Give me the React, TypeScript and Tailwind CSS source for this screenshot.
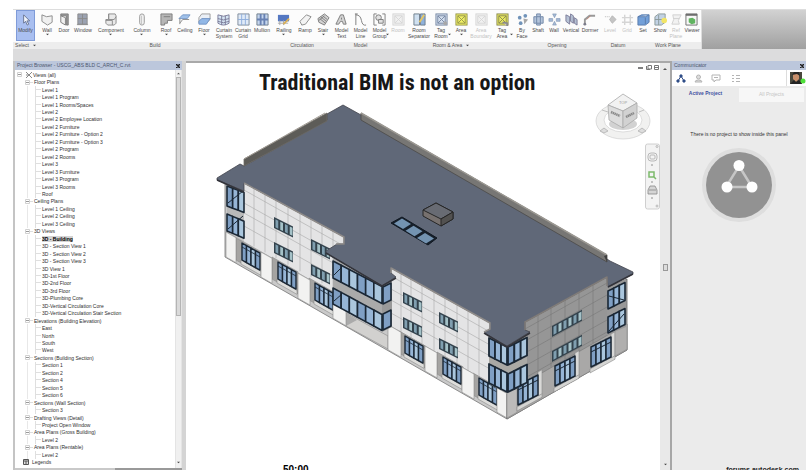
import React from "react";

type Tool = { label: string[]; icon: string; width: string; arrow?: boolean; sideArrow?: boolean; muted?: boolean; active?: boolean };
type Group = { name: string; arrow?: boolean; tools: Tool[] };

const groups: Group[] = [
  { name: "Select", arrow: true, tools: [{ label: ["Modify"], icon: "cursor", width: "w-[25px]", active: true }] },
  {
    name: "Build",
    tools: [
      { label: ["Wall"], icon: "wall", width: "w-[18px]", arrow: true },
      { label: ["Door"], icon: "door", width: "w-4" },
      { label: ["Window"], icon: "window", width: "w-[22px]" },
      { label: ["Component"], icon: "component", width: "w-[34px]", arrow: true },
      { label: ["Column"], icon: "column", width: "w-7", arrow: true },
      { label: ["Roof"], icon: "roof", width: "w-5", arrow: true },
      { label: ["Ceiling"], icon: "ceiling", width: "w-[18px]" },
      { label: ["Floor"], icon: "floor", width: "w-5", arrow: true },
      { label: ["Curtain", "System"], icon: "curtain", width: "w-5" },
      { label: ["Curtain", "Grid"], icon: "curtaingrid", width: "w-[18px]" },
      { label: ["Mullion"], icon: "mullion", width: "w-5" },
    ],
  },
  {
    name: "Circulation",
    tools: [
      { label: ["Railing"], icon: "railing", width: "w-6", arrow: true },
      { label: ["Ramp"], icon: "ramp", width: "w-[18px]" },
      { label: ["Stair"], icon: "stair", width: "w-[18px]", arrow: true },
    ],
  },
  {
    name: "Model",
    tools: [
      { label: ["Model", "Text"], icon: "text", width: "w-[19px]" },
      { label: ["Model", "Line"], icon: "line", width: "w-[19px]" },
      { label: ["Model", "Group"], icon: "group", width: "w-[19px]", sideArrow: true },
    ],
  },
  {
    name: "Room & Area",
    arrow: true,
    tools: [
      { label: ["Room"], icon: "room", width: "w-[18px]", muted: true },
      { label: ["Room", "Separator"], icon: "separator", width: "w-6" },
      { label: ["Tag", "Room"], icon: "tagroom", width: "w-5", sideArrow: true },
      { label: ["Area"], icon: "area", width: "w-5", arrow: true },
      { label: ["Area", "Boundary"], icon: "room", width: "w-5", muted: true },
      { label: ["Tag", "Area"], icon: "tagarea", width: "w-[22px]", sideArrow: true },
    ],
  },
  {
    name: "Opening",
    tools: [
      { label: ["By", "Face"], icon: "face", width: "w-[18px]" },
      { label: ["Shaft"], icon: "shaft", width: "w-3.5" },
      { label: ["Wall"], icon: "openwall", width: "w-[18px]" },
      { label: ["Vertical"], icon: "vertical", width: "w-4" },
      { label: ["Dormer"], icon: "dormer", width: "w-[22px]" },
    ],
  },
  {
    name: "Datum",
    tools: [
      { label: ["Level"], icon: "level", width: "w-[18px]", muted: true },
      { label: ["Grid"], icon: "grid", width: "w-4", muted: true },
    ],
  },
  {
    name: "Work Plane",
    tools: [
      { label: ["Set"], icon: "set", width: "w-4" },
      { label: ["Show"], icon: "show", width: "w-[18px]" },
      { label: ["Ref", "Plane"], icon: "refplane", width: "w-3.5", muted: true },
      { label: ["Viewer"], icon: "viewer", width: "w-[18px]" },
    ],
  },
];

const xbox = (fill: string, stroke: string) => (
  <g stroke={stroke}>
    <rect x="1" y="1" width="12" height="12" fill={fill} />
    <path d="M3 3l8 8M11 3l-8 8" />
    <path d="M3 3h8v8h-8z" fill="none" />
  </g>
);

const icons: Record<string, React.ReactNode> = {
  cursor: <path d="M5 2v9l2-2 2 4 1.500-1-2-3.500h3z" fill="#fff" stroke="#5a6480" />,
  wall: <path d="M1 2l5 2 6-1v7l-5 3-6-4z" fill="#eee" stroke="#777" />,
  door: <g stroke="#666"><path d="M3 1h8v12h-2v-10h-6z" fill="#888" /><path d="M3 3l5 2v8l-5-3z" fill="#eee" /></g>,
  window: <g stroke="#777"><path d="M2 1h10v11h-10z" fill="#8b93a5" /><path d="M7 1v11M2 6h10M1 12.500h12" /></g>,
  component: <g fill="#e6e6e6" stroke="#777"><path d="M5 1h7l1 2v8l-2 2h-7l-2-2v-4h3z" /><path d="M5 1v6h6l2-3M2 8h7v5" fill="none" /></g>,
  column: <g fill="#eee" stroke="#888"><rect x="5" y="1" width="5" height="12" rx="2.500" /><path d="M7 3v9" stroke="#bbb" /></g>,
  roof: <path d="M1 1h12v7h-5v3h-3v2h-4z M4 4h7" fill="#aaa" stroke="#666" />,
  ceiling: <g stroke="#6288bd"><path d="M1 6l4-4h8l-3 4z" fill="#8fb7e8" /><path d="M2 6v6M2 11l3-4h7" fill="none" stroke="#777" /></g>,
  floor: <g stroke="#888"><path d="M4 1h9v6l-4 4h-8v-6z" fill="#e8edf5" /><path d="M1 9l3-3h9l-4 6h-8z" fill="#7fabe3" stroke="#5b83bb" /></g>,
  curtain: <g fill="#cfe0f2" stroke="#668"><path d="M1 2q6 3 12 0v9q-6 4-12 0z" /><path d="M5 3v10M9 3v10M1 6q6 3 12 0M1 9q6 3 12 0" fill="none" /></g>,
  curtaingrid: <g fill="#dce8f7" stroke="#678"><path d="M1 1h12v12h-12z" /><path d="M5 1v12M9 1v12M1 7h12" stroke="#7ba0d6" /></g>,
  mullion: <g fill="#bcd0ec" stroke="#567"><path d="M1 1h12v12h-12z" /><path d="M5 1v12M9 1v12M1 7h12" strokeWidth="2" stroke="#4f6ca6" /></g>,
  railing: <g><path d="M1 2h12v7h-12z" fill="#3862b8" /><path d="M1 11h11M3 8v5M7 8v5" stroke="#999" /><path d="M7 12l6-6" stroke="#d5a33b" strokeWidth="2" /></g>,
  ramp: <path d="M1 9l7-7 5 2-6 8-4 1z" fill="#f2f2f2" stroke="#777" />,
  stair: <path d="M1 6l7-5 5 4-5 8-6-3z M4 4l6 5M6 3l5 4M3 6l6 5M2 8l6-5" fill="#ccc" stroke="#666" />,
  text: <path d="M1 12l5-10h3l3 10h-3l-1-3h-2l-2 3z M7 5v2" fill="#ccc" stroke="#666" />,
  line: <path d="M2 1v12M2 2q5 0 6 6t5 5M1 1h3" fill="none" stroke="#666" />,
  group: <g fill="#ddd" stroke="#666"><path d="M4 1h-3v12h3M10 1h3v12h-3" fill="none" /><circle cx="6" cy="5" r="3" /><path d="M6 7h5v4h-5z" /></g>,
  room: xbox("#f0f0f0", "#d0d0d0"),
  separator: <g stroke="#567"><path d="M1 1h6v12h-6z" fill="#c8dcef" /><path d="M8 1h5v12h-5z" fill="#7ba4d6" /><path d="M7 10l5-8" stroke="#e4be48" strokeWidth="2" /></g>,
  tagroom: <g>{xbox("#cedbec", "#607394")}<circle cx="11" cy="11" r="2" fill="#999" /></g>,
  area: xbox("#f0f04c", "#84842f"),
  tagarea: <g>{xbox("#eaea48", "#777735")}<path d="M7 10l5 1v3" fill="#ccc" stroke="#777" strokeWidth="2" /></g>,
  face: <g fill="#5881ae"><circle cx="4" cy="5" r="2" /><circle cx="10" cy="3" r="2" /><circle cx="5" cy="11" r="2" /><path d="M8 6l5 1-4 5z" fill="#999" /></g>,
  shaft: <path d="M2 4h3v-3h4v3h3v7h-3v2h-4v-2h-3z M5 4h4v7h-4z" fill="#a8bbd6" stroke="#577398" />,
  openwall: <g fill="#95aed0" stroke="#7088aa" strokeWidth=".7"><path d="M5 1h4l-2 4zM1 6h4v3h-4zM9 6h4v3h-4zM5 13h4l-2-4z" /></g>,
  vertical: <g fill="#aab9cf" stroke="#668"><path d="M1 2l4 2v8l-4-3zM6 1l3 2v8l-3-2zM10 5l3 2v6l-3-2z" /></g>,
  dormer: <g><path d="M2 12v-5l5-4h6" fill="none" stroke="#888" strokeWidth="2" /><path d="M4 7l4-4" stroke="#b56d5c" /><circle cx="2" cy="12" r="1.500" fill="#667" /></g>,
  level: <g stroke="#aaa" fill="#bbb"><path d="M1 4h5" strokeDasharray="1 1" /><path d="M9 3l4 4-4 4-3-4z" /></g>,
  grid: <path d="M4 2v11M10 2v11M1 5h12M1 10h12" stroke="#cfcfcf" strokeWidth="1.500" />,
  set: <path d="M1 4l4-2h8v8l-4 3h-8z M1 4h8l4-2M9 5v7" fill="#5a8fd2" stroke="#3d649e" />,
  show: <g><path d="M1 4l4-3h7v9l-4 3h-7z M1 7h11M5 2v11" fill="#b9cbe0" stroke="#788" /><circle cx="11" cy="8" r="3" fill="#f1e24c" /></g>,
  refplane: <path d="M3 2h9l-3 6 1 4h-8l2-5z M4 6h6" fill="#f1f1f1" stroke="#c9c9c9" />,
  viewer: <g><path d="M1 1h12v12h-12z" fill="#f7f7f7" stroke="#555" /><path d="M1 2h12" stroke="#555" strokeWidth="2" /><path d="M4 6l4-1 3 2v4l-4 1-3-2z" fill="#47a846" /></g>,
};

function ToolButton({ tool }: { tool: Tool }) {
  return (
    <button
      type="button"
      className={`${tool.width} relative flex h-full shrink-0 flex-col items-center pt-[3px] ${tool.muted ? "text-[#c2c2c2]" : "text-[#4a4a4a]"}`}
    >
      <span className={`flex flex-col items-center ${tool.active ? "-mt-[3px] h-[31px] w-[19px] border border-[#7f9bd8] bg-[#a9bff0] pt-[2px]" : ""}`}>
        <svg className="h-[13px] w-[13px] shrink-0 opacity-85" viewBox="0 0 14 14" fill="none">{icons[tool.icon]}</svg>
        <span className="mt-px flex flex-col items-center text-[5px] leading-[6px] whitespace-nowrap">
          {tool.label.map((line) => <span key={line}>{line}</span>)}
        </span>
        {tool.arrow && <Caret />}
      </span>
      {tool.sideArrow && <span className="absolute right-0 bottom-[6px]"><Caret /></span>}
    </button>
  );
}

function Caret() {
  return <svg className="block h-[3px] w-[3px] shrink-0" viewBox="0 0 4 4"><path d="M0 1h4l-2 2z" fill="#444" /></svg>;
}

function Ribbon() {
  return (
    <header className="flex h-10 shrink-0 overflow-hidden border-t border-[#ddd] bg-[linear-gradient(#d2d2d2,#a0a0a0)]">
      {groups.map((g) => (
        <section key={g.name} className="-mr-px flex shrink-0 flex-col border-r border-[#ddd] bg-[#fcfcfc] last:mr-0">
          <div className="flex h-8">{g.tools.map((t, i) => <ToolButton key={i} tool={t} />)}</div>
          <div className="flex h-[7px] items-center justify-center gap-1 bg-[#ededed] text-[5px] text-[#555] whitespace-nowrap">
            {g.name}{g.arrow && <Caret />}
          </div>
        </section>
      ))}
    </header>
  );
}

const tree: { name: string; items: string[] }[] = [
  {
    name: "Floor Plans",
    items: ["Level 1", "Level 1 Program", "Level 1 Rooms/Spaces", "Level 2", "Level 2 Employee Location", "Level 2 Furniture", "Level 2 Furniture - Option 2", "Level 2 Furniture - Option 3", "Level 2 Program", "Level 2 Rooms", "Level 3", "Level 3 Furniture", "Level 3 Program", "Level 3 Rooms", "Roof"],
  },
  { name: "Ceiling Plans", items: ["Level 1 Ceiling", "Level 2 Ceiling", "Level 3 Ceiling"] },
  {
    name: "3D Views",
    items: ["3D - Building", "3D - Section View 1", "3D - Section View 2", "3D - Section View 3", "3D View 1", "3D-1st Floor", "3D-2nd Floor", "3D-3rd Floor", "3D-Plumbing Core", "3D-Vertical Circulation Core", "3D-Vertical Circulation Stair Section"],
  },
  { name: "Elevations (Building Elevation)", items: ["East", "North", "South", "West"] },
  { name: "Sections (Building Section)", items: ["Section 1", "Section 2", "Section 4", "Section 5", "Section 6"] },
  { name: "Sections (Wall Section)", items: ["Section 3"] },
  { name: "Drafting Views (Detail)", items: ["Project Open Window"] },
  { name: "Area Plans (Gross Building)", items: ["Level 2"] },
  { name: "Area Plans (Rentable)", items: ["Level 2"] },
];

function Minus() {
  return (
    <svg className="h-[5px] w-[5px] shrink-0" viewBox="0 0 5 5">
      <path d="M.5.5h4v4h-4z" fill="#fff" stroke="#d0d0d0" /><path d="M1 2.500h3" stroke="#999" />
    </svg>
  );
}

const row = "flex min-h-0 flex-1 items-center";

function ProjectBrowser() {
  return (
    <aside className="flex w-[173px] shrink-0 flex-col border-r-4 border-l-2 border-r-[#d4d4d4] border-l-[#c4c4c4]">
      <PanelTitle text="Project Browser - USCG_ABS BLD C_ARCH_C.rvt" />
      <div className="flex min-h-0 flex-1 bg-white">
        <div className="flex min-w-0 flex-1 flex-col pt-px pb-[2px] text-[5px] leading-[6px] text-[#2e2e2e] whitespace-nowrap">
          <div className={row}>
            <span className="ml-[2px] flex"><Minus /></span>
            <svg className="mr-px ml-1 h-[6px] w-[6px]" viewBox="0 0 6 6"><path d="M0 0l6 6M6 0l-6 6M0 3h2" stroke="#888" /></svg>
            <button type="button">Views (all)</button>
          </div>
          {tree.map((branch) => (
            <React.Fragment key={branch.name}>
              <div className={row}>
                <span className="ml-[10px] flex"><Minus /></span>
                <span className="mr-px w-[3px] border-t border-[#ddd]" />
                <button type="button">{branch.name}</button>
              </div>
              {branch.items.map((item) => (
                <div key={item} className={row}>
                  <span className="ml-3 h-full w-2 border-l border-[#e8e8e8]" />
                  <span className="mr-px h-full w-[6px] border-l border-[#dfdfdf]"><span className="block h-1/2 border-b border-[#dfdfdf]" /></span>
                  <button type="button" className={item === "3D - Building" ? "bg-[#d4d4d4] font-bold text-black" : ""}>{item}</button>
                </div>
              ))}
            </React.Fragment>
          ))}
          <div className={row}>
            <svg className="mr-[3px] ml-2 h-[6px] w-[6px]" viewBox="0 0 6 6"><path d="M.5.5h5v5h-5zM0 2h6M3 2v4" fill="#ddd" stroke="#555" /></svg>
            <button type="button">Legends</button>
          </div>
        </div>
        <div className="flex w-[7px] flex-col items-center border-x border-[#e4e4e4] bg-[#f0f0f0]">
          <svg className="my-[2px] h-[3px] w-[3px]" viewBox="0 0 4 4"><path d="M0 3h4l-2-2z" fill="#555" /></svg>
          <div className="h-3/5 w-[5px] border border-[#b4b4b4] bg-[#dadada]" />
          <div className="flex-1" />
          <div className="mb-1"><Caret /></div>
        </div>
      </div>
      <div className="flex h-[2px] shrink-0 justify-end bg-[#c9c9c9]"><div className="w-2/5 bg-[#999]" /></div>
    </aside>
  );
}

function PanelTitle({ text }: { text: string }) {
  return (
    <div className="flex h-[9px] shrink-0 items-center justify-between bg-[#bcc7dc] px-[2px] text-[5px] whitespace-nowrap text-[#4c566e]">
      <span>{text}</span>
      <button type="button" aria-label="Close" className="flex">
        <svg className="h-[4px] w-[4px]" viewBox="0 0 4 4"><path d="M0 0l4 4M4 0l-4 4" stroke="#222" strokeWidth="1.500" /></svg>
      </button>
    </div>
  );
}

const INK = "#1a2735";

/* A glazed strip between two verticals: y is the top left corner, s the slope, n the number of panes. */
function Glass({ x, y, w, h, s, n, frame = 1 }: { x: number; y: number; w: number; h: number; s: number; n: number; frame?: number }) {
  const panes = Array.from({ length: n }, (_, i) => i);
  const p = w / n;
  return (
    <g stroke={INK} strokeWidth={frame}>
      {panes.map((i) => (
        <path
          key={i}
          d={`M${x + i * p} ${y + i * p * s}l${p} ${p * s}v${h}l${-p} ${-p * s}z`}
          fill={i % 3 === 1 ? "#96b5d6" : i % 3 === 2 ? "#aac6dd" : "#7f9fc4"}
        />
      ))}
    </g>
  );
}

/* Punched window: dark panes with a bright reflection in each. */
function Punched({ x, y, w, s, n }: { x: number; y: number; w: number; s: number; n: number }) {
  const p = w / n;
  return (
    <g>
      <path d={`M${x} ${y}l${w} ${w * s}v11l${-w} ${-w * s}z`} fill="#33424c" />
      {Array.from({ length: n }, (_, i) => (
        <path
          key={i}
          d={`M${x + i * p + 1.500} ${y + (i * p + 1.500) * s + 1.500}l${p - 2} ${(p - 2) * s}v8l${2 - p} ${(2 - p) * s}z`}
          fill={i % 2 ? "#a5c2c8" : "#809fb0"}
        />
      ))}
    </g>
  );
}

function Face({ x, y, w, h, s, fill, stroke = "#8a8a8a" }: { x: number; y: number; w: number; h: number; s: number; fill: string; stroke?: string }) {
  return <path d={`M${x} ${y}l${w} ${w * s}v${h}l${-w} ${-w * s}z`} fill={fill} stroke={stroke} strokeWidth=".6" />;
}

const leftPiers = [[226, 10], [261, 11], [298, 12], [333, 13], [388, 13], [425, 12], [462, 12], [497, 10]];
const leftShops = [[242, 243], [278, 262], [315, 283], [405, 336], [443, 357], [479, 378]];
const leftWindows = [[274, 217], [274, 242], [311, 239], [311, 264], [403, 292], [403, 317], [439, 312], [439, 338]];

function Building() {
  return (
    <g strokeLinejoin="round">
      {/* long facade */}
      <path d="M225 182L507 340V419L225 257z" fill="#c9c9c9" stroke="#777" strokeWidth=".8" />
      <path d="M244 183L344 237V320L244 263z" fill="#e4e4e5" />
      <path d="M391 268L490 323V398L391 340z" fill="#e4e4e5" />
      <g stroke="#a8a8a8" strokeWidth=".6">
        {[190, 203, 213, 226].map((y) => <path key={y} d={`M244 ${y}L344 ${y + 56}`} />)}
        {[276, 289, 300, 313].map((y) => <path key={y} d={`M391 ${y}L490 ${y + 56}`} />)}
        {[254, 265, 276, 288, 300, 311, 322, 333].map((x) => <path key={x} d={`M${x} ${183 + (x - 244) * 0.54}v58`} />)}
        {[401, 411, 422, 434, 445, 457, 468, 479].map((x) => <path key={x} d={`M${x} ${268 + (x - 391) * 0.55}v61`} />)}
      </g>
      <path d="M225 231L507 393" stroke="#aaa" strokeWidth=".8" />
      <path d="M346 313L388 336V349L346 326z" fill="#d2d1cf" stroke="#888" strokeWidth=".6" />
      <path d="M346 326V313L357 320z" fill="#aaa" />
      {leftShops.map(([x, y]) => (
        <g key={x}>
          <Face x={x - 6} y={y - 5} w={26} h={22} s={0.57} fill="#a5a4a2" />
          <Face x={x - 1} y={y + 17} w={20} h={4} s={0.57} fill="#dddddb" />
          <Glass x={x} y={y} w={18} h={17} s={0.56} n={4} frame={1.4} />
          <path d={`M${x} ${y + 4}l18 10`} stroke={INK} strokeWidth=".8" />
        </g>
      ))}
      {leftPiers.map(([x, w]) => <Face key={x} x={x} y={232 + (x - 226) * 0.573} w={w} h={25} s={0.57} fill="#f2f2f1" />)}
      {leftWindows.map(([x, y]) => <Punched key={`${x}-${y}`} x={x} y={y} w={19} s={0.5} n={4} />)}

      {/* short facade */}
      <path d="M507 345L525 334V322L607 277V288L627 279V350L507 419z" fill="#a3a3a2" stroke="#666" strokeWidth=".8" />
      <path d="M525 322L607 277V338L525 383z" fill="#969696" />
      <g stroke="#777" strokeWidth=".6">
        {[329, 341, 353, 366, 378].map((y) => <path key={y} d={`M525 ${y}L607 ${y - 46}`} />)}
        {[538, 551, 565, 579, 593].map((x) => <path key={x} d={`M${x} ${322 - (x - 525) * 0.55}v59`} />)}
      </g>
      <path d="M507 393L627 324V350L507 419z" fill="#a9a8a7" stroke="#777" strokeWidth=".6" />
      <Face x={507} y={393} w={10} h={25} s={-0.57} fill="#bcbbba" />
      {[[518, 385], [555, 366], [591, 347]].map(([x, y]) => (
        <g key={x}>
          <Face x={x - 1} y={y + 22} w={25} h={4} s={-0.55} fill="#d5d5d3" />
          <Face x={x + 20} y={y - 13} w={4} h={24} s={-0.55} fill="#d9d9d7" />
          <Glass x={x} y={y} w={20} h={20} s={-0.5} n={4} frame={1.500} />
          <path d={`M${x} ${y + 5}l20 -10`} stroke={INK} />
        </g>
      ))}
      <Face x={615} y={331} w={12} h={25} s={-0.57} fill="#b0afae" />
      <Punched x={552} y={326} w={30} s={-0.54} n={6} />
      <Punched x={552} y={351} w={30} s={-0.54} n={6} />

      {/* glazed bays */}
      <path d="M227 184L244 190V239L227 231z" fill="#b9b9b9" />
      <Glass x={227} y={186} w={17} h={20} s={0.38} n={3} frame={1.6} />
      <Glass x={227} y={214} w={17} h={17} s={0.42} n={3} frame={1.6} />
      <path d="M228 203l15-12M228 229l15-13" stroke={INK} />
      <path d="M333 258L382 285V331L333 304z" fill="#aaa" />
      <path d="M382 285L392 279V327L382 332z" fill="#999" />
      <Glass x={333} y={261} w={49} h={17} s={0.52} n={6} frame={1.6} />
      <Glass x={333} y={288} w={49} h={16} s={0.54} n={6} frame={1.6} />
      <Glass x={383} y={287} w={8} h={17} s={-0.5} n={1} frame={1.6} />
      <Glass x={383} y={314} w={8} h={16} s={-0.5} n={1} frame={1.6} />
      <path d="M334 275l8-8M334 301l8-7" stroke={INK} />
      <path d="M489 337L507 346 527 335V383L507 394 489 384z" fill="#aaa9a5" />
      <Glass x={489} y={338} w={18} h={18} s={0.5} n={3} frame={1.8} />
      <Glass x={489} y={364} w={18} h={19} s={0.5} n={3} frame={1.8} />
      <Glass x={508} y={347} w={19} h={18} s={-0.5} n={3} frame={1.8} />
      <Glass x={508} y={374} w={19} h={18} s={-0.5} n={3} frame={1.8} />
      <path d="M607 288L626 279V327L607 335z" fill="#999" />
      <Glass x={608} y={291} w={17} h={18} s={-0.5} n={3} frame={1.6} />
      <Glass x={608} y={317} w={17} h={16} s={-0.5} n={3} frame={1.6} />
      <path d="M609 296l15 4M609 331l15-17" stroke={INK} />

      {/* roof */}
      <path
        d="M343 105L361 115 607 259 610 261 633 272 633 274 608 287 607 277 525 322 525 330 530 332 507 346 484 333 490 329 490 323 391 268 391 273 396 277 382 286 326 253 326 251 337 244 344 244 344 237 244 183 244 191 217 180 217 178 240 164 244 166 327 120 327 114z"
        fill="#606878"
        stroke="#42444d"
        strokeWidth=".8"
      />
      <path d="M217 180L244 192M326 253L382 286 396 278M484 333L507 347 530 333M608 287L633 274" fill="none" stroke="#33343b" strokeWidth="1.500" />
      <path d="M244 159L327 113V121L244 166z" fill="#5d5c58" stroke="#6c6a65" strokeWidth=".8" />
      <path d="M244 159L325 113" stroke="#a19c94" />
      <path d="M361 113L607 255V262L361 120z" fill="#777674" stroke="#4b4a48" strokeWidth=".8" />
      <path d="M361 113L607 255" stroke="#9c9993" strokeWidth="1.500" />
      <path d="M604 256l3-1v7z" fill="#3f3f3f" />
      <path d="M244 183L344 237V244L336 244M391 273V268L490 323V329L484 332" fill="none" stroke="#8f8c8a" strokeWidth="1.500" />
      <path d="M525 330V322L607 277V286" fill="none" stroke="#807c79" strokeWidth="1.500" />

      {/* roof equipment */}
      <path d="M391 223L402 217 437 238 428 245z" fill="#17202b" stroke="#111923" />
      {[0, 1, 2].map((i) => (
        <path key={i} d={`M${402 + i * 11.500} ${218.500 + i * 7.200}l9 5.500-8 5-9-5.500z`} fill="#7393b1" />
      ))}
      <path d="M423 210L436 203 453 212V219L441 226 423 216z" fill="#77716f" stroke="#262626" />
      <path d="M423 210L436 203 453 212 441 219z" fill="#686b73" stroke="#262626" />
      <path d="M441 219V226L453 219V212z" fill="#525150" stroke="#262626" />
    </g>
  );
}

function ViewCube() {
  return (
    <g>
      <path d="M596 121a27 18 0 1 0 54 0a27 18 0 1 0-54 0zM604 120a19 12 0 1 0 38 0a19 12 0 1 0-38 0z" fill="#f1f1f0" fillRule="evenodd" stroke="#d0d0d0" strokeWidth=".7" />
      <path d="M600 131l4-3 4 3-4 2zM638 131l4-3 4 3-4 2zM602 110l6 2M644 110l-5 2" stroke="#aaa" fill="#ddd" strokeWidth=".7" />
      <ellipse cx="623" cy="124" rx="14" ry="6" fill="#d2d2d2" />
      <g stroke="#aaa" strokeWidth=".8">
        <path d="M608 105L623 94 637 103 623 111z" fill="#f2f2f2" />
        <path d="M608 105L623 111V128L609 120z" fill="#ddd" />
        <path d="M637 103L623 111V128L637 118z" fill="#d2d2d2" />
      </g>
      <text x="623" y="104" fill="#999" fontSize="4" fontFamily="Liberation Sans, sans-serif" textAnchor="middle">TOP</text>
      <path d="M611 112l9 4M626 117l8-4" stroke="#8a8a8a" strokeWidth="2.500" strokeDasharray="1.500 .4" />
    </g>
  );
}

function NavBar() {
  return (
    <g stroke="#aaa" fill="none" strokeWidth=".8">
      <rect x="645.500" y="144" width="14" height="65" rx="2" fill="#f3f3f3" stroke="#c4c4c4" />
      <circle cx="657" cy="146.500" r="1" />
      <circle cx="657" cy="206" r="1" />
      <rect x="648" y="153" width="9" height="8" rx="3" />
      <rect x="650" y="155" width="5" height="4" rx="1" />
      <path d="M649 172h5v5h-5zM653 176l3 3" stroke="#7dba6c" strokeWidth="1.500" />
      <path d="M648 190l2-4h5l2 4v4h-9zM649 190h7" fill="#d5d5d5" stroke="#888" />
      <path d="M651 165h2M651 182h2M651 198h2" stroke="#777" />
    </g>
  );
}

function Canvas() {
  return (
    <main className="relative min-w-0 flex-1 overflow-hidden border-t-2 border-[#a9a9a9] bg-white">
      <svg className="block h-full w-full" viewBox="186 63 474 407" role="img" aria-label="Isometric view of an office building">
        <Building />
        <ViewCube />
        <NavBar />
        <path d="M638 68h5" stroke="#555" strokeWidth="1.500" />
        <path d="M646.500 66v3.500h3.500M648 65.500h3.500v3.500h-3.500zM654.500 65.500h4v4h-4zM655 67.500h3" fill="none" stroke="#777" />
      </svg>
      <h1 className="absolute inset-x-0 top-[5px] pl-[73px] font-['Liberation_Sans_Narrow','Roboto_Condensed','Open_Sans_Condensed',Roboto,sans-serif] text-[22px] leading-[30px] font-bold whitespace-nowrap text-[#171717]">
        Traditional BIM is not an option
      </h1>
      <div className="absolute -bottom-[6px] left-[97px] text-[10px] leading-[12px] font-bold text-black">50:00</div>
    </main>
  );
}

function CommunicatorPanel() {
  return (
    <aside className="relative flex w-[136px] shrink-0 flex-col overflow-hidden border-l-2 border-[#a7a7a7] bg-[#ebebeb]">
      <PanelTitle text="Communicator" />
      <nav className="flex h-4 shrink-0 items-center bg-white pl-1 text-[#b4b4b4]">
        <button type="button" aria-label="Projects" className="mr-2">
          <svg className="h-[9px] w-[10px]" viewBox="0 0 10 9" fill="#2e4c87" stroke="#2e4c87"><path d="M5 2l-3 5M5 2l3 5" /><circle cx="5" cy="2" r="1.200" /><circle cx="2" cy="7" r="1.200" /><circle cx="8" cy="7" r="1.200" /></svg>
        </button>
        <button type="button" aria-label="Contacts" className="mr-2">
          <svg className="h-[9px] w-[9px]" viewBox="0 0 9 9" fill="#ddd" stroke="currentColor"><circle cx="4.500" cy="3" r="2" /><path d="M1 8q0-2 3.500-2t3.500 2z" /></svg>
        </button>
        <button type="button" aria-label="Messages" className="mr-[10px]">
          <svg className="h-[9px] w-[10px]" viewBox="0 0 10 9" fill="none" stroke="currentColor"><path d="M1 1h8v5h-4l-2 2v-2h-2zM3 3.500h4" /></svg>
        </button>
        <button type="button" aria-label="Activity">
          <svg className="h-[9px] w-[10px]" viewBox="0 0 10 9" fill="none" stroke="currentColor"><path d="M1 1.500h2M5 1.500h4M1 4.500h2M5 4.500h4M1 7.500h2M5 7.500h4" /></svg>
        </button>
        <button type="button" aria-label="Profile" className="ml-auto flex h-full items-center border-l border-[#ddd] pl-[3px]">
          <svg className="h-[12px] w-[16px]" viewBox="0 0 16 12"><path d="M0 0h12v12h-12z" fill="#49483d" /><path d="M3 2h6v5l-3 3-3-3z" fill="#c88f6b" /><path d="M2 3l2-3h5l1 4-3-2zM0 12l4-4 2 2 3-2 3 4z" fill="#252525" /><circle cx="13" cy="9" r="2.500" fill="#4fe03b" /></svg>
        </button>
      </nav>
      <div className="grid h-4 shrink-0 grid-cols-2 text-[5px]">
        <button type="button" className="font-bold text-[#3e4ea0]">Active Project</button>
        <button type="button" className="mt-[2px] mr-[2px] bg-[#f7f7f7] text-[#c5c5c5]">All Projects</button>
      </div>
      <p className="mt-[29px] text-center text-[5px] leading-[6px] whitespace-nowrap text-[#333]">There is no project to show inside this panel</p>
      <svg className="mx-auto mt-[10px] h-[76px] w-[76px] shrink-0" viewBox="0 0 76 76">
        <circle cx="38" cy="38" r="37" fill="#dedede" />
        <circle cx="38" cy="38" r="33" fill="#929292" />
        <path d="M38 19L51 40H25z" fill="none" stroke="#c6c6c6" strokeWidth="2.500" />
        <g fill="#fff"><circle cx="38" cy="18.500" r="5.500" /><circle cx="26" cy="40" r="5.500" /><circle cx="51" cy="40" r="5.500" /></g>
      </svg>
      <div className="absolute right-[7px] -bottom-[4px] text-[7px] leading-[9px] font-bold text-[#222]">forums.autodesk.com</div>
    </aside>
  );
}

export default function App() {
  return (
    <div className="flex h-screen flex-col overflow-hidden bg-white pt-[9px] pr-[3px] pl-[13px] font-['Liberation_Sans',Arial,sans-serif]">
      <Ribbon />
      <div className="h-3 shrink-0 bg-[#dcdcdd]" />
      <div className="flex min-h-0 flex-1">
        <ProjectBrowser />
        <Canvas />
        <div className="flex w-[10px] shrink-0 flex-col items-center justify-between border-t-2 border-[#a9a9a9] bg-[#e9e9e9] py-1">
          <svg className="h-1 w-1" viewBox="0 0 4 4"><path d="M0 3h4l-2-2z" fill="#555" /></svg>
          <div className="h-[7px] w-[5px] border border-[#999] bg-[#ddd]" />
          <Caret />
        </div>
        <CommunicatorPanel />
      </div>
    </div>
  );
}
